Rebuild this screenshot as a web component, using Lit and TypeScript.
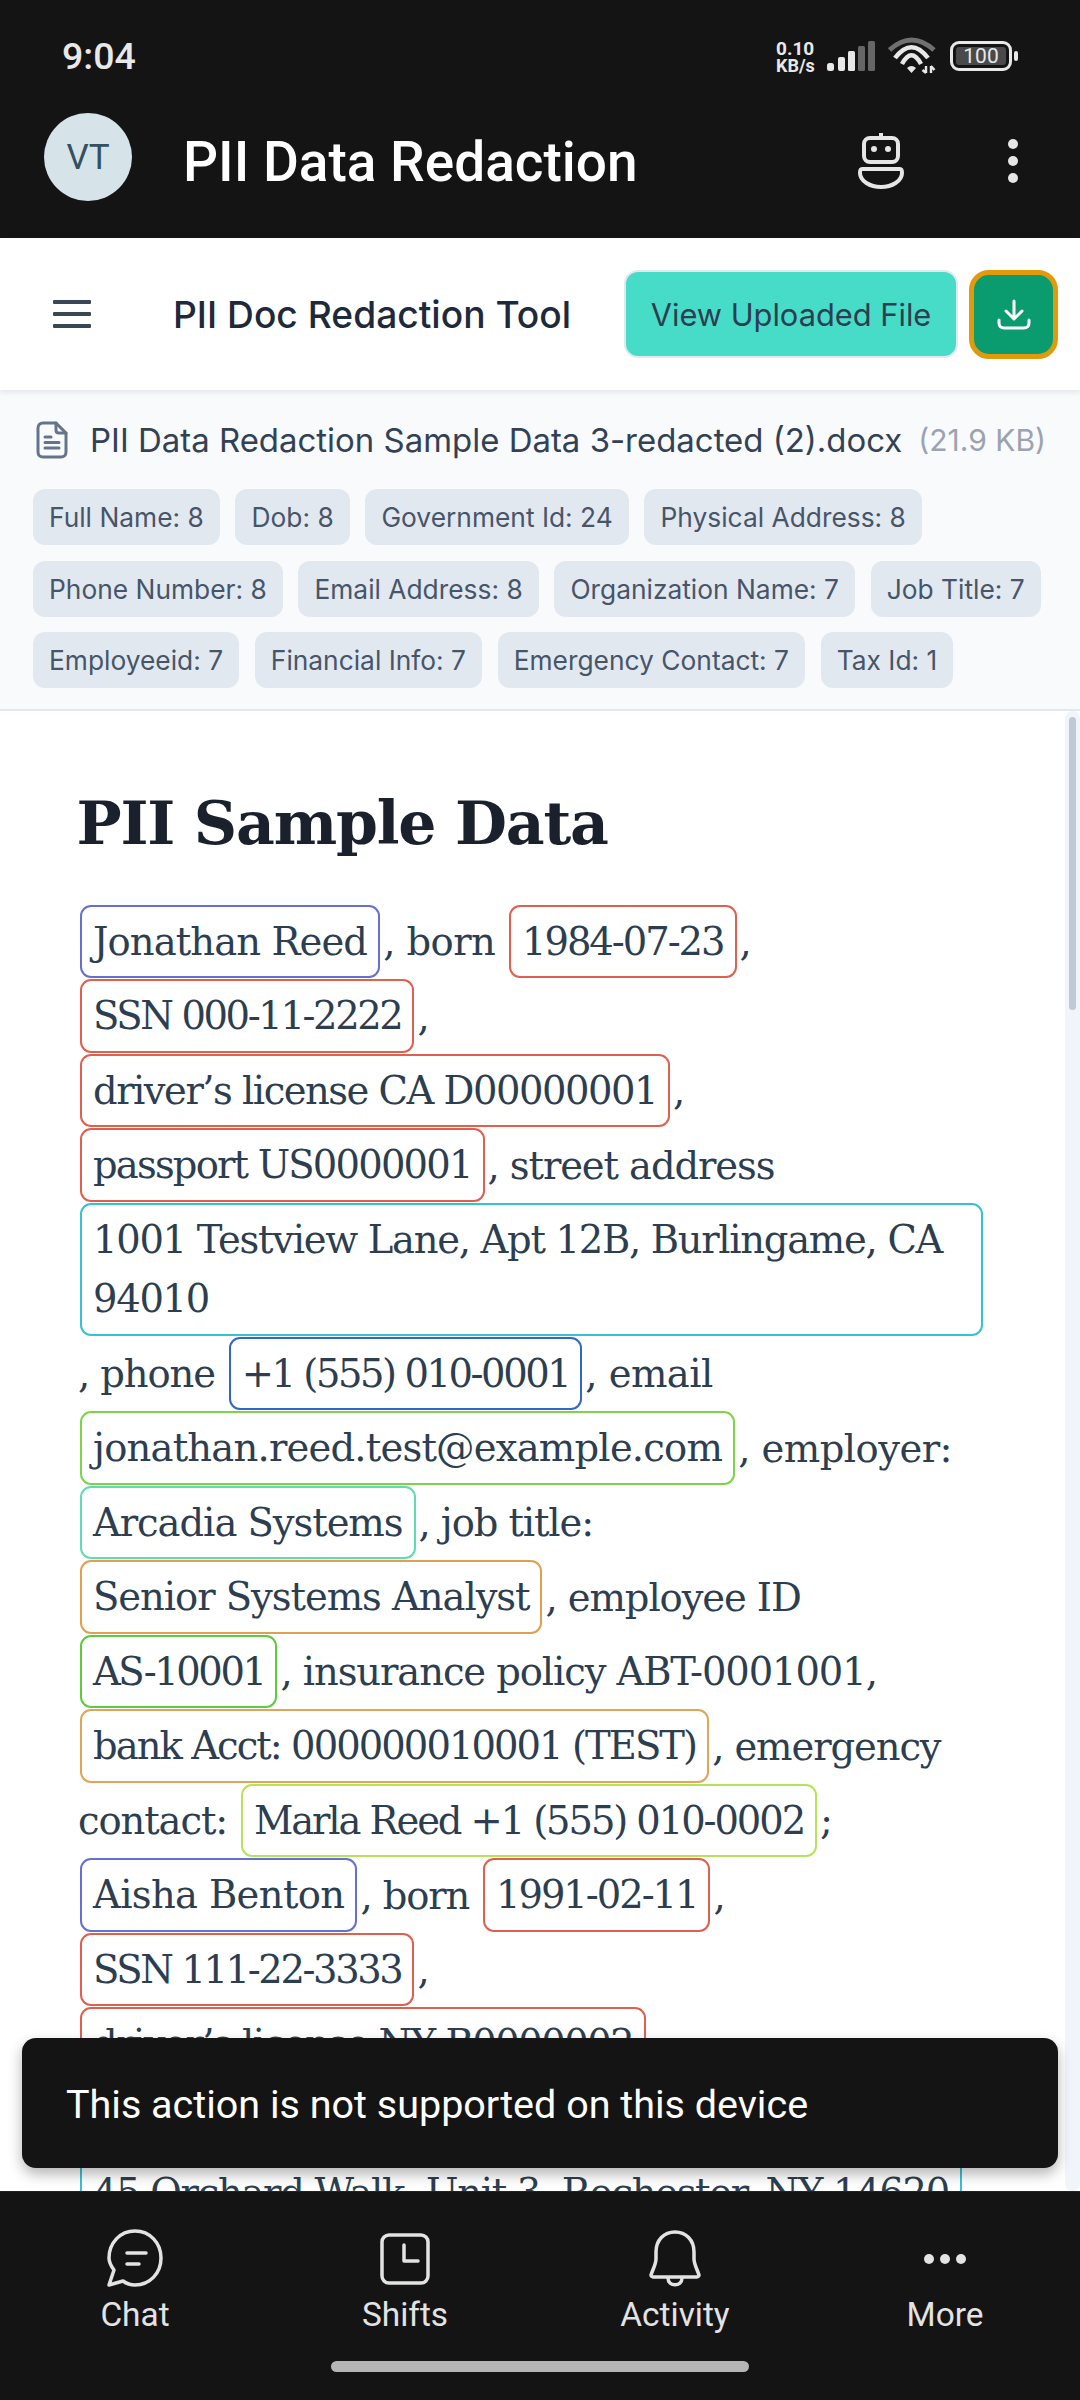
import { LitElement, html, css } from "lit";
import { customElement } from "lit/decorators.js";

const C = {
  name: "#6570d0", gov: "#e0604f", addr: "#38c0d6", phone: "#3068c8", email: "#7ed34a",
  org: "#5fdcb0", job: "#e0a050", emp: "#5ecb3f", fin: "#e0a55a", emer: "#b6e35a",
};

const chipRows = [
  ["Full Name: 8", "Dob: 8", "Government Id: 24", "Physical Address: 8"],
  ["Phone Number: 8", "Email Address: 8", "Organization Name: 7", "Job Title: 7"],
  ["Employeeid: 7", "Financial Info: 7", "Emergency Contact: 7", "Tax Id: 1"],
];

@customElement("app-root")
export class AppRoot extends LitElement {
  static styles = css`
    :host { display: block; width: 1080px; height: 2400px; position: relative; overflow: hidden; background: #fff; font-family: Inter, "Noto Sans", sans-serif; }
    .page { display: flex; flex-direction: column; height: 2400px; }
    .top { background: #141414; height: 238px; flex: none; display: flex; flex-direction: column; }
    .status { height: 84px; flex: none; display: flex; align-items: center; padding: 28px 62px 0 62px; box-sizing: border-box; justify-content: space-between; color: #e8e8e8; font-family: Roboto, sans-serif; }
    .time { font-size: 37.5px; font-weight: 500; }
    .stat { display: flex; align-items: center; }
    .speed { font-size: 18px; line-height: 17px; font-weight: 700; width: 51px; margin-top: 2px; }
    .speed div { white-space: nowrap; }
    .speed .a { font-size: 19px; }
    .battery { display: flex; align-items: center; margin-left: 14px; }
    .bat-body { width: 62px; height: 30px; box-sizing: border-box; border: 3px solid #e8e8e8; border-radius: 9px; padding: 3px; display: flex; }
    .bat-fill { flex: 1; background: #4a4a4a; border-radius: 3px; font-size: 21px; line-height: 18px; text-align: center; color: #e8e8e8; }
    .bat-tip { width: 4px; height: 10px; background: #e8e8e8; margin-left: 2px; border-radius: 2px; }
    .appbar { flex: 1; display: flex; align-items: center; padding: 0 61px 0 44px; }
    .avatar { width: 88px; height: 88px; margin-top: -8px; border-radius: 50%; background: #d6e4ea; color: #35505e; display: flex; align-items: center; justify-content: center; font: 400 35px Roboto, sans-serif; }
    .apptitle { font: 500 55px Roboto, sans-serif; color: #fff; margin-left: 51px; padding-top: 2px; flex: 1; }
    .appbar svg { display: block; }
    .dots { margin-left: 103px; }
    .tool { height: 152px; flex: none; background: #fff; display: flex; align-items: center; padding: 0 22px 0 53px; box-shadow: 0 2px 6px rgba(30,41,59,.10); position: relative; z-index: 1; box-sizing: border-box; }
    .burger { width: 38px; height: 28px; display: flex; flex-direction: column; justify-content: space-between; flex: none; }
    .burger i { display: block; height: 4px; background: #3b4757; border-radius: 1px; }
    .tooltitle { font-size: 37.2px; font-weight: 500; color: #1e293b; margin-left: 82px; flex: 1; white-space: nowrap; }
    .view { width: 334px; height: 88px; box-sizing: border-box; background: #46dcc8; border: 2px solid #e2e8f0; border-radius: 14px; color: #2c3e50; font-size: 30.8px; font-weight: 400; display: flex; align-items: center; justify-content: center; white-space: nowrap; }
    .dl { width: 89px; height: 89px; box-sizing: border-box; background: #0a9b6e; border: 5px solid #e09a0c; border-radius: 20px; margin-left: 11px; display: flex; align-items: center; justify-content: center; }
    .meta { flex: none; height: 321px; box-sizing: border-box; background: #f8fafc; border-bottom: 2px solid #e2e8f0; padding: 26px 33px 0; }
    .file { display: flex; align-items: center; height: 48px; margin-bottom: 25px; white-space: nowrap; }
    .fname { font-size: 32.95px; font-weight: 400; color: #334155; margin-left: 22px; }
    .fsize { font-size: 30px; color: #9ca3af; margin-left: 16px; }
    .chips { display: flex; flex-direction: column; gap: 15.5px; }
    .chiprow { display: flex; gap: 15.7px; }
    .chip { height: 56px; box-sizing: border-box; padding: 0 16px; background: #e2e8f0; border-radius: 12px; color: #475569; font-size: 26.35px; display: flex; align-items: center; white-space: nowrap; }
    .doc { flex: 1; min-height: 0; display: flex; background: #fff; overflow: hidden; }
    .content { flex: 1; padding: 76px 79px 0 78px; min-width: 0; overflow: hidden; }
    h1 { margin: 0 0 45px -1.5px; font: 700 60px/1.2 "DejaVu Serif", serif; color: #1a202c; letter-spacing: -1.2px; }
    .para { margin: 0; font: 400 38.5px/59.5px "DejaVu Serif", serif; color: #2d3e50; letter-spacing: -0.55px; }
    .m { display: inline-block; vertical-align: baseline; border: 2px solid; border-radius: 11px; padding: 5px 11px; margin: 0.5px 3px 0.5px 2px; }
    .tight { letter-spacing: -1.1px; }
    .scroll { width: 15px; flex: none; background: #f1f5f9; border-radius: 7px; }
    .thumb { height: 293px; background: #c0cad6; border-radius: 4px; margin: 6px 4px 0; }
    .toast { position: absolute; left: 22px; top: 2038px; width: 1036px; height: 130px; background: #141414; border-radius: 14px; box-shadow: 0 6px 14px rgba(0,0,0,.3); color: #fff; font: 400 39.5px Roboto, sans-serif; display: flex; align-items: center; padding: 2px 0 0 44px; box-sizing: border-box; }
    .nav { flex: none; height: 209px; background: #141414; box-sizing: border-box; display: flex; flex-direction: column; border-top: 1px solid #222; }
    .tabs { display: grid; grid-template-columns: repeat(4, 270px); padding-top: 37px; }
    .tab { display: flex; flex-direction: column; align-items: center; color: #e3e3e3; font: 400 33.4px Roboto, sans-serif; gap: 6px; }
    .tab svg { display: block; }
    .home { width: 418px; height: 11px; background: #b5b5b5; border-radius: 6px; align-self: center; margin-top: 27px; }
  `;

  mark(text: string, c: string, ls: number) {
    return html`<span class="m" style="border-color:${c};letter-spacing:${ls}px">${text}</span>`;
  }

  render() {
    const m = this.mark;
    return html`
      <div class="page">
        <div class="top">
          <div class="status">
            <span class="time">9:04</span>
            <div class="stat">
              <div class="speed"><div class="a">0.10</div><div>KB/s</div></div>
              <svg width="48" height="32" viewBox="0 0 48 32">
                <rect x="0" y="23" width="7" height="8" rx="2.5" fill="#e8e8e8"/>
                <rect x="11" y="17" width="7" height="14" rx="2" fill="#e8e8e8"/>
                <rect x="21" y="11" width="7" height="20" rx="1.5" fill="#e8e8e8"/>
                <rect x="31" y="6" width="7" height="25" rx="1.5" fill="#666"/>
                <rect x="41" y="1" width="7" height="30" rx="1.5" fill="#666"/>
              </svg>
              <svg style="margin-left:13px" width="48" height="38" viewBox="0 0 48 38" fill="none">
                <path d="M1.5 13 Q23.5 -7 46 13" stroke="#707070" stroke-width="5"/>
                <path d="M7 21 Q23.5 -0.7 40 21" stroke="#e8e8e8" stroke-width="4.5"/>
                <path d="M14 27 Q23.5 9.5 33 27" stroke="#e8e8e8" stroke-width="4.5"/>
                <path d="M19 31 Q23.5 27 28 31 L23.5 36 Z" fill="#e8e8e8"/>
                <path d="M38 29 V36 M34.5 33 L38 36 M43 29 V36 M43 29 L46.5 33" stroke="#e8e8e8" stroke-width="2.4"/>
              </svg>
              <div class="battery"><div class="bat-body"><div class="bat-fill">100</div></div><div class="bat-tip"></div></div>
            </div>
          </div>
          <div class="appbar">
            <div class="avatar">VT</div>
            <div class="apptitle">PII Data Redaction</div>
            <svg width="46" height="58" viewBox="0 0 46 58" fill="none" stroke="#e6e6e6" stroke-width="4">
              <path d="M23 1 V6"/>
              <rect x="6" y="6" width="34" height="24" rx="6"/>
              <circle cx="16" cy="17" r="3" fill="#e6e6e6" stroke="none"/>
              <circle cx="30" cy="17" r="3" fill="#e6e6e6" stroke="none"/>
              <path d="M4 37 H42 C44 37 44 39 44 41 C44 49 34 55 23 55 C12 55 2 49 2 41 C2 39 2 37 4 37 Z"/>
            </svg>
            <svg class="dots" width="12" height="46" viewBox="0 0 12 46" fill="#e6e6e6">
              <circle cx="6" cy="6" r="5"/><circle cx="6" cy="23" r="5"/><circle cx="6" cy="40" r="5"/>
            </svg>
          </div>
        </div>
        <div class="tool">
          <div class="burger"><i></i><i></i><i></i></div>
          <div class="tooltitle">PII Doc Redaction Tool</div>
          <div class="view">View Uploaded File</div>
          <div class="dl">
            <svg width="34" height="31" viewBox="0 0 34 31" fill="none" stroke="#fff" stroke-width="3" stroke-linecap="round" stroke-linejoin="round">
              <path d="M17 2 V20 M9 12 L17 20 L25 12"/>
              <path d="M2 21 V24 C2 27 4 29 7 29 H27 C30 29 32 27 32 24 V21"/>
            </svg>
          </div>
        </div>
        <div class="meta">
          <div class="file">
            <svg width="32" height="38" viewBox="0 0 32 38" fill="none" stroke="#64748b" stroke-width="3" stroke-linecap="round" stroke-linejoin="round" style="margin-left:3px">
              <path d="M20 2 H7 C4 2 2 4 2 7 V31 C2 34 4 36 7 36 H25 C28 36 30 34 30 31 V12 Z"/>
              <path d="M20 2 V9 C20 11 21 12 23 12 H30"/>
              <path d="M9 16 H15 M9 21.5 H23 M9 27 H23"/>
            </svg>
            <span class="fname">PII Data Redaction Sample Data 3-redacted (2).docx</span>
            <span class="fsize">(21.9 KB)</span>
          </div>
          <div class="chips">
            ${chipRows.map((r) => html`<div class="chiprow">${r.map((c) => html`<span class="chip">${c}</span>`)}</div>`)}
          </div>
        </div>
        <div class="doc">
          <div class="content">
            <h1>PII Sample Data</h1>
            <p class="para">
              ${m("Jonathan Reed", C.name, -0.9)}, born ${m("1984-07-23", C.gov, -2.05)},
              ${m("SSN 000-11-2222", C.gov, -2.4)},
              ${m("driver’s license CA D00000001", C.gov, -1.5)},
              ${m("passport US0000001", C.gov, -1.82)}<span class="tight">, street address</span>
              ${m("1001 Testview Lane, Apt 12B, Burlingame, CA 94010", C.addr, -1.3)}<span class="tight">, phone</span>
              ${m("+1 (555) 010-0001", C.phone, -2.45)}, email
              ${m("jonathan.reed.test@example.com", C.email, -0.8)}, employer:
              ${m("Arcadia Systems", C.org, -1.05)}<span class="tight">, job title:</span>
              ${m("Senior Systems Analyst", C.job, -1.05)}<span class="tight">, employee ID</span>
              ${m("AS-10001", C.emp, -2.45)}<span class="tight">, insurance policy ABT-0001001,</span>
              ${m("bank Acct: 000000010001 (TEST)", C.fin, -1.95)}<span class="tight">, emergency contact:</span>
              ${m("Marla Reed +1 (555) 010-0002", C.emer, -2.1)};
              ${m("Aisha Benton", C.name, -0.65)}<span class="tight">, born</span> ${m("1991-02-11", C.gov, -2.05)},
              ${m("SSN 111-22-3333", C.gov, -2.4)},
              ${m("driver’s license NY B0000002", C.gov, -1.5)},
              ${m("passport US0000002", C.gov, -1.82)}<span class="tight">, street address</span>
              ${m("45 Orchard Walk, Unit 3, Rochester, NY 14620", C.addr, -1.3)}
            </p>
          </div>
          <div class="scroll"><div class="thumb"></div></div>
        </div>
        <div class="nav">
          <div class="tabs">
            <div class="tab">
              <svg width="60" height="60" viewBox="0 0 60 60" fill="none" stroke="#e3e3e3" stroke-width="3.5" stroke-linecap="round" stroke-linejoin="round">
                <path d="M4 57 L9 42 C6 38 4 34 4 30 C4 15 15 3 30 3 C45 3 56 15 56 30 C56 45 45 57 30 57 C26 57 22 56 18 53 Z" transform="translate(0,-1)"/>
                <path d="M22 24 H41 M22 35 H34"/>
              </svg>
              <span>Chat</span>
            </div>
            <div class="tab">
              <svg width="60" height="60" viewBox="0 0 60 60" fill="none" stroke="#e3e3e3" stroke-width="3.5" stroke-linecap="round" stroke-linejoin="round">
                <rect x="7" y="6" width="46" height="48" rx="7"/>
                <path d="M29 16 V32 H43"/>
              </svg>
              <span>Shifts</span>
            </div>
            <div class="tab">
              <svg width="60" height="60" viewBox="0 0 60 60" fill="none" stroke="#e3e3e3" stroke-width="3.5" stroke-linecap="round" stroke-linejoin="round">
                <path d="M11 30 V23 C11 11 19 3 30 3 C41 3 49 11 49 23 V30 C49 35 52 40 54 46 C54 47 53 48 52 48 H8 C7 48 6 47 6 46 C8 40 11 35 11 30 Z"/>
                <path d="M23 49 C23 58 37 58 37 49"/>
              </svg>
              <span>Activity</span>
            </div>
            <div class="tab">
              <svg width="60" height="60" viewBox="0 0 60 60" fill="#e3e3e3">
                <circle cx="14" cy="30" r="5"/><circle cx="30" cy="30" r="5"/><circle cx="46" cy="30" r="5"/>
              </svg>
              <span>More</span>
            </div>
          </div>
          <div class="home"></div>
        </div>
        <div class="toast">This action is not supported on this device</div>
      </div>
    `;
  }
}
